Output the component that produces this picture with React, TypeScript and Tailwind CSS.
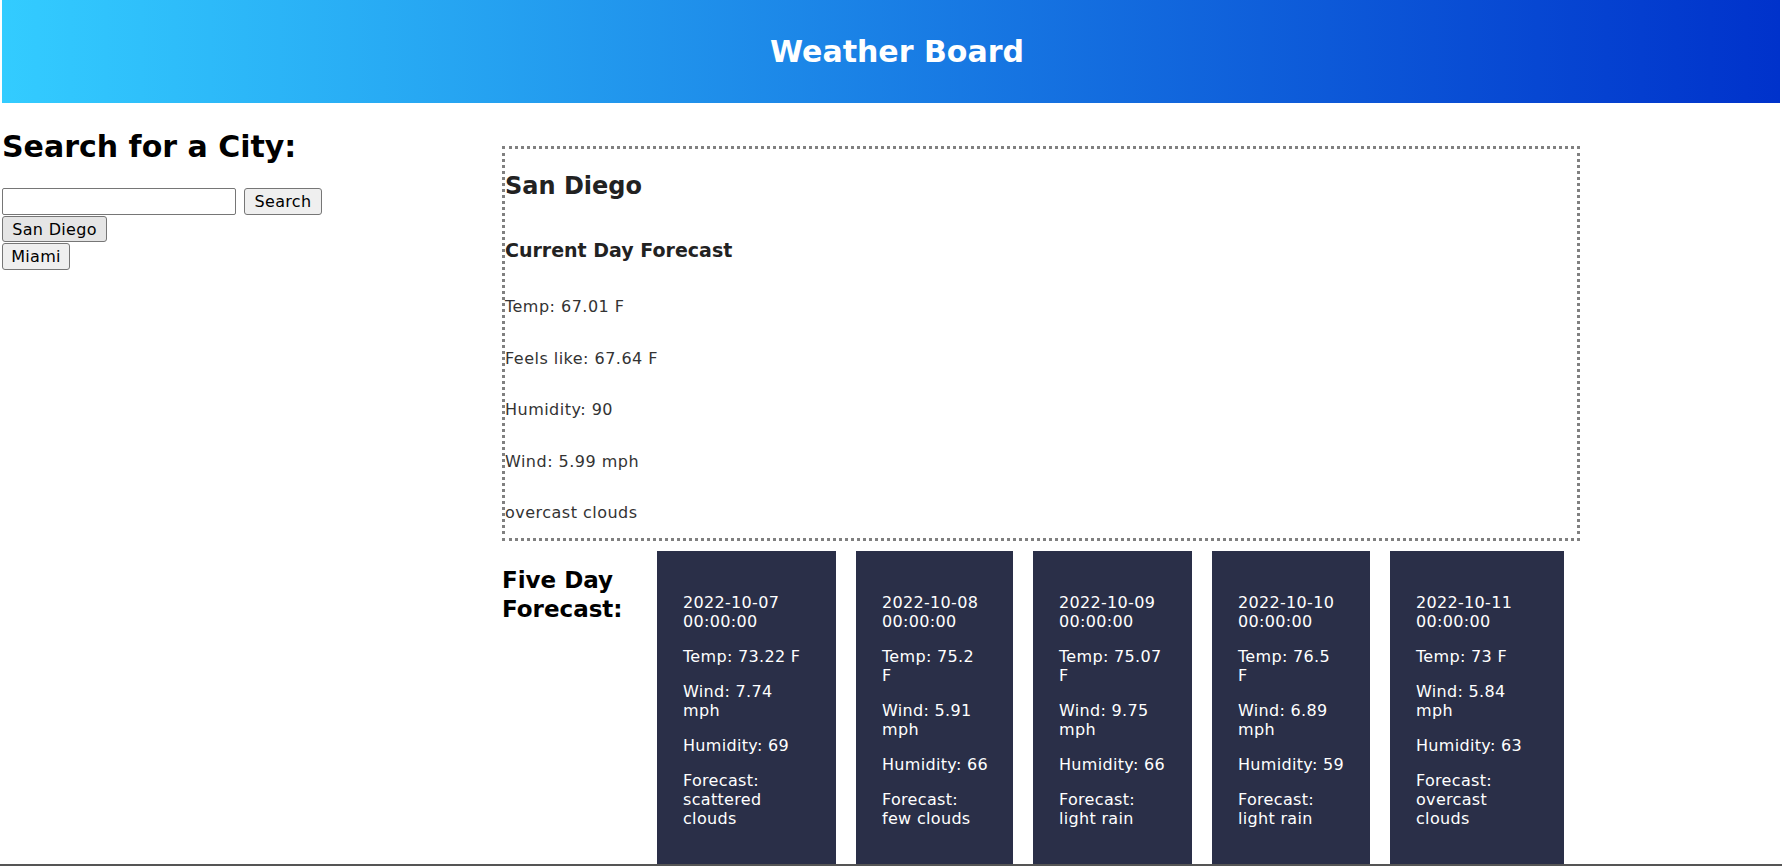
import React from "react";

const current = [
  "Temp: 67.01 F",
  "Feels like: 67.64 F",
  "Humidity: 90",
  "Wind: 5.99 mph",
  "overcast clouds",
];

type Card = { w: string; paras: string[][] };

const cards: Card[] = [
  {
    w: "w-[179px]",
    paras: [
      ["2022-10-07", "00:00:00"],
      ["Temp: 73.22 F"],
      ["Wind: 7.74", "mph"],
      ["Humidity: 69"],
      ["Forecast:", "scattered", "clouds"],
    ],
  },
  {
    w: "w-[157px]",
    paras: [
      ["2022-10-08", "00:00:00"],
      ["Temp: 75.2", "F"],
      ["Wind: 5.91", "mph"],
      ["Humidity: 66"],
      ["Forecast:", "few clouds"],
    ],
  },
  {
    w: "w-[159px]",
    paras: [
      ["2022-10-09", "00:00:00"],
      ["Temp: 75.07", "F"],
      ["Wind: 9.75", "mph"],
      ["Humidity: 66"],
      ["Forecast:", "light rain"],
    ],
  },
  {
    w: "w-[158px]",
    paras: [
      ["2022-10-10", "00:00:00"],
      ["Temp: 76.5", "F"],
      ["Wind: 6.89", "mph"],
      ["Humidity: 59"],
      ["Forecast:", "light rain"],
    ],
  },
  {
    w: "w-[174px]",
    paras: [
      ["2022-10-11", "00:00:00"],
      ["Temp: 73 F"],
      ["Wind: 5.84", "mph"],
      ["Humidity: 63"],
      ["Forecast:", "overcast", "clouds"],
    ],
  },
];

export default function App() {
  return (
    <div className="min-h-[866px] bg-white px-[2px] font-['DejaVu_Sans','Verdana',sans-serif] text-black">
      <header className="flex h-[103px] items-center justify-center bg-[linear-gradient(to_right,#33ccff,#0032cb)]">
        <h1 className="pl-[12px] text-[30px] font-bold leading-[35px] text-white">Weather Board</h1>
      </header>

      <div className="flex items-start">
        <aside className="w-[500px] shrink-0">
          <h2 className="mt-[26px] text-[30px] font-bold leading-[35px]">Search for a City:</h2>
          <div className="mt-[24px] flex items-center">
            <input
              type="text"
              className="h-[27px] w-[234px] rounded-[2px] border border-[#767676] bg-white px-[2px] text-[16px]"
            />
            <button className="ml-[8px] h-[27px] w-[78px] rounded-[3px] border border-[#767676] bg-[#efefef] text-[16px] leading-[19px] tracking-[0.02em]">
              Search
            </button>
          </div>
          <div className="mt-[1px] flex flex-col items-start gap-[1px]">
            <button className="h-[26px] w-[105px] rounded-[3px] border border-[#767676] bg-[#e5e5e5] text-[16px] leading-[19px] tracking-[0.02em]">
              San Diego
            </button>
            <button className="h-[27px] w-[68px] rounded-[3px] border border-[#767676] bg-[#efefef] text-[16px] leading-[19px] tracking-[0.02em]">
              Miami
            </button>
          </div>
        </aside>

        <main className="mt-[43px] w-[1078px] shrink-0">
          <section className="border-[3px] border-dotted border-[#808080] pt-[23px] pb-[16px] text-[#333]">
            <h2 className="text-[24px] font-bold leading-[28px] text-[#222]">San Diego</h2>
            <h3 className="mt-[39px] text-[19px] font-bold leading-[23px] text-[#222]">Current Day Forecast</h3>
            <div className="mt-[35px] flex flex-col gap-[32.5px]">
              {current.map((t) => (
                <p key={t} className="text-[16px] leading-[19px] tracking-[0.03em]">
                  {t}
                </p>
              ))}
            </div>
          </section>

          <div className="mt-[10px] flex items-start">
            <h2 className="mt-[15px] w-[155px] shrink-0 text-[23px] font-bold leading-[29px]">
              Five Day Forecast:
            </h2>
            <div className="flex items-start gap-[20px]">
              {cards.map((c, i) => (
                <div
                  key={i}
                  className={`${c.w} flex shrink-0 flex-col gap-[16px] bg-[#2a2f48] px-[26px] pt-[42px] pb-[42px] text-[16px] leading-[19px] tracking-[0.02em] text-white`}
                >
                  {c.paras.map((p, j) => (
                    <p key={j} className="whitespace-nowrap">
                      {p.map((l, k) => (
                        <React.Fragment key={k}>
                          {k > 0 && <br />}
                          {l}
                        </React.Fragment>
                      ))}
                    </p>
                  ))}
                </div>
              ))}
            </div>
          </div>
        </main>
      </div>

      <div className="fixed bottom-0 left-0 right-0 h-[2px] bg-[#555]" />
    </div>
  );
}
